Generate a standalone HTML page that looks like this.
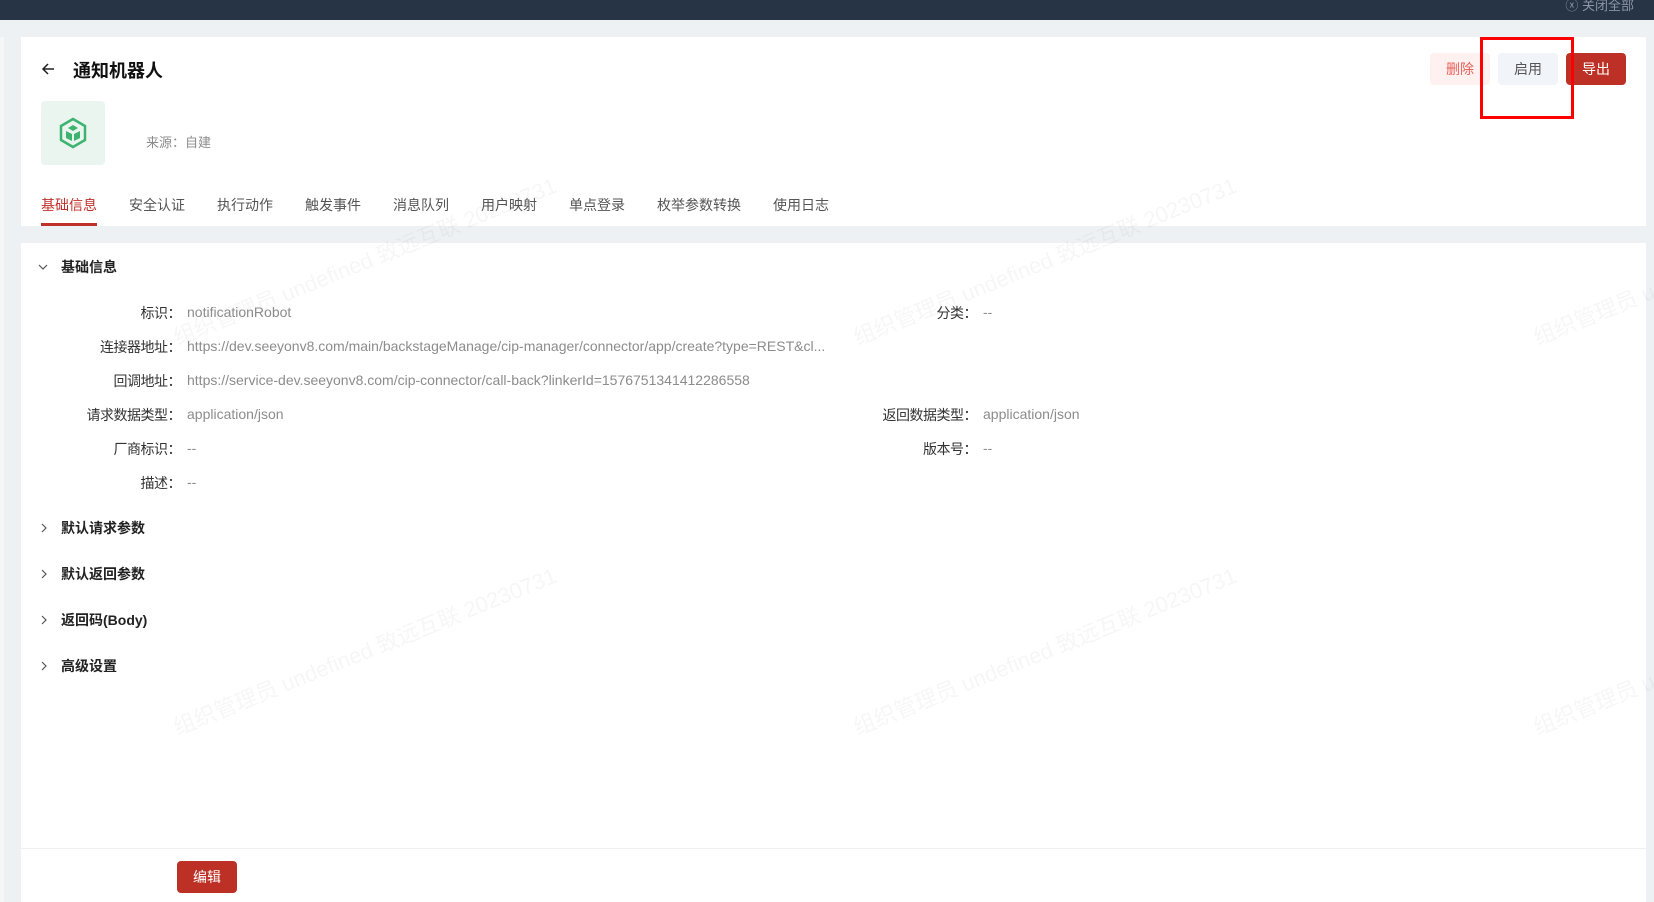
<!DOCTYPE html>
<html><head><meta charset="utf-8"><style>
*{margin:0;padding:0;box-sizing:border-box}
body{width:1654px;height:902px;overflow:hidden;background:#eef1f4;font-family:"Liberation Sans","Noto Sans CJK SC",sans-serif;position:relative;color:#333}
.a{position:absolute}
.top{left:0;top:0;width:1654px;height:20px;background:#263445}
.card1{left:21px;top:37px;width:1625px;height:189px;background:#fff}
.card2{left:21px;top:243px;width:1625px;height:659px;background:#fff}
.btn{height:32px;width:60px;border-radius:4px;font-size:14px;line-height:32px;text-align:center}
.tab{top:195px;font-size:14px;color:#555;white-space:nowrap}
.lab{font-size:14px;color:#333;text-align:right;width:200px;white-space:nowrap;letter-spacing:-0.5px}
.val{font-size:14px;color:#8c8c8c;white-space:nowrap}
.sec{font-size:14px;font-weight:bold;color:#222}
.wm{font-size:22px;color:rgba(0,0,0,0.035);transform:rotate(-22deg);transform-origin:left bottom;white-space:nowrap}
</style></head><body>
<div class="a top"></div>
<div class="a" style="right:20px;top:-5px;font-size:13px;color:#8a96a6">ⓧ 关闭全部</div>
<div class="a" style="left:0;top:37px;width:4px;height:865px;background:#f5f6f8"></div>
<div class="a card1"></div>
<svg class="a" style="left:41px;top:62px" width="14" height="14" viewBox="0 0 14 14"><path d="M13 7H2M7 2L2 7L7 12" fill="none" stroke="#222" stroke-width="1.5"/></svg>
<div class="a" style="left:73px;top:57px;font-size:18px;font-weight:bold;color:#111">通知机器人</div>
<div class="a" style="left:41px;top:101px;width:64px;height:64px;background:#ebf5ef;border-radius:4px"></div>
<svg class="a" style="left:58px;top:117px" width="30" height="32" viewBox="0 0 30 32"><path d="M15 2 L27 9 L27 23 L15 30 L3 23 L3 9 Z" fill="none" stroke="#3db370" stroke-width="2.5"/><path d="M15 8 L20 11 L15 14 L10 11 Z" fill="#3db370"/><path d="M8 14 L14 17 L14 24 L8 21 Z M22 14 L16 17 L16 24 L22 21 Z" fill="#3db370"/></svg>
<div class="a" style="left:146px;top:132px;font-size:13px;color:#8c8c8c">来源：自建</div>
<div class="a tab" style="left:41px;color:#c0302b">基础信息</div>
<div class="a" style="left:41px;top:223px;width:56px;height:3px;background:#c0302b"></div>
<div class="a tab" style="left:129px">安全认证</div>
<div class="a tab" style="left:217px">执行动作</div>
<div class="a tab" style="left:305px">触发事件</div>
<div class="a tab" style="left:393px">消息队列</div>
<div class="a tab" style="left:481px">用户映射</div>
<div class="a tab" style="left:569px">单点登录</div>
<div class="a tab" style="left:657px">枚举参数转换</div>
<div class="a tab" style="left:773px">使用日志</div>
<div class="a btn" style="left:1430px;top:53px;background:#fff1f0;color:#e8605a">删除</div>
<div class="a btn" style="left:1498px;top:53px;background:#f1f4f8;color:#555">启用</div>
<div class="a btn" style="left:1566px;top:53px;background:#bc3026;color:#fff">导出</div>
<div class="a" style="left:1480px;top:37px;width:94px;height:82px;border:3px solid #f00"></div>

<div class="a card2"></div>
<div class="a wm" style="left:180px;top:320px">组织管理员 undefined 致远互联 20230731</div>
<div class="a wm" style="left:860px;top:320px">组织管理员 undefined 致远互联 20230731</div>
<div class="a wm" style="left:1540px;top:320px">组织管理员 u</div>
<div class="a wm" style="left:180px;top:710px">组织管理员 undefined 致远互联 20230731</div>
<div class="a wm" style="left:860px;top:710px">组织管理员 undefined 致远互联 20230731</div>
<div class="a wm" style="left:1540px;top:710px">组织管理员 u</div>
<svg class="a" style="left:38px;top:263px" width="10" height="8" viewBox="0 0 10 8"><path d="M1 2L5 6L9 2" fill="none" stroke="#555" stroke-width="1.2"/></svg>
<div class="a sec" style="left:61px;top:257px">基础信息</div>
<div class="a lab" style="left:-19px;top:303px">标识：</div><div class="a val" style="left:187px;top:304px">notificationRobot</div>
<div class="a lab" style="left:-19px;top:337px">连接器地址：</div><div class="a val" style="left:187px;top:338px">https://dev.seeyonv8.com/main/backstageManage/cip-manager/connector/app/create?type=REST&amp;cl...</div>
<div class="a lab" style="left:-19px;top:371px">回调地址：</div><div class="a val" style="left:187px;top:372px">https://service-dev.seeyonv8.com/cip-connector/call-back?linkerId=1576751341412286558</div>
<div class="a lab" style="left:-19px;top:405px">请求数据类型：</div><div class="a val" style="left:187px;top:406px">application/json</div>
<div class="a lab" style="left:-19px;top:439px">厂商标识：</div><div class="a val" style="left:187px;top:440px">--</div>
<div class="a lab" style="left:-19px;top:473px">描述：</div><div class="a val" style="left:187px;top:474px">--</div>
<div class="a lab" style="left:777px;top:303px">分类：</div><div class="a val" style="left:983px;top:304px">--</div>
<div class="a lab" style="left:777px;top:405px">返回数据类型：</div><div class="a val" style="left:983px;top:406px">application/json</div>
<div class="a lab" style="left:777px;top:439px">版本号：</div><div class="a val" style="left:983px;top:440px">--</div>
<svg class="a" style="left:40px;top:523px" width="8" height="10" viewBox="0 0 8 10"><path d="M2 1L6 5L2 9" fill="none" stroke="#555" stroke-width="1.2"/></svg><div class="a sec" style="left:61px;top:518px">默认请求参数</div>
<svg class="a" style="left:40px;top:569px" width="8" height="10" viewBox="0 0 8 10"><path d="M2 1L6 5L2 9" fill="none" stroke="#555" stroke-width="1.2"/></svg><div class="a sec" style="left:61px;top:564px">默认返回参数</div>
<svg class="a" style="left:40px;top:615px" width="8" height="10" viewBox="0 0 8 10"><path d="M2 1L6 5L2 9" fill="none" stroke="#555" stroke-width="1.2"/></svg><div class="a sec" style="left:61px;top:610px">返回码(Body)</div>
<svg class="a" style="left:40px;top:661px" width="8" height="10" viewBox="0 0 8 10"><path d="M2 1L6 5L2 9" fill="none" stroke="#555" stroke-width="1.2"/></svg><div class="a sec" style="left:61px;top:656px">高级设置</div>
<div class="a" style="left:21px;top:848px;width:1625px;height:1px;background:#f0f0f0"></div>
<div class="a btn" style="left:177px;top:861px;background:#bc3026;color:#fff">编辑</div>
</body></html>
